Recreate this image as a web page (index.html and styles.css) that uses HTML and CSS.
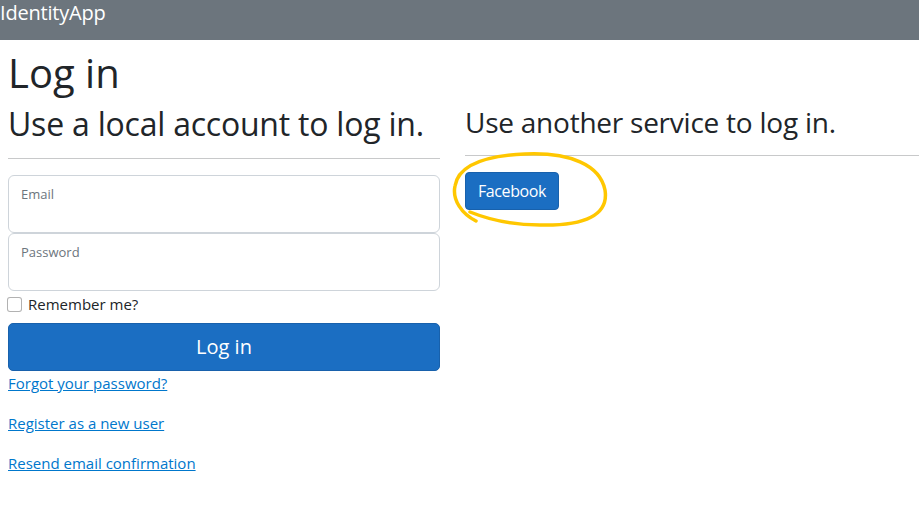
FILE: index.html
```html
<!DOCTYPE html>
<html lang="en">
<head>
<meta charset="utf-8">
<title>Log in - IdentityApp</title>
<link rel="stylesheet" href="styles.css">
</head>
<body>
<header class="navbar">
  <span class="brand">IdentityApp</span>
</header>
<main class="page">
  <h1 class="title">Log in</h1>
  <div class="columns">
    <section class="col-local">
      <h2 class="heading">Use a local account to log in.</h2>
      <hr class="rule">
      <form class="login-form">
        <div class="floating">
          <input class="field" type="email" id="email">
          <label class="floating-label" for="email">Email</label>
        </div>
        <div class="floating">
          <input class="field" type="password" id="password">
          <label class="floating-label" for="password">Password</label>
        </div>
        <div class="check">
          <input class="check-box" type="checkbox" id="remember">
          <label class="check-label" for="remember">Remember me?</label>
        </div>
        <button class="btn btn-lg" type="button">Log in</button>
        <div class="links">
          <p class="link-row"><a class="link" href="#">Forgot your password?</a></p>
          <p class="link-row"><a class="link" href="#">Register as a new user</a></p>
          <p class="link-row"><a class="link" href="#">Resend email confirmation</a></p>
        </div>
      </form>
    </section>
    <section class="col-external">
      <h3 class="heading-sm">Use another service to log in.</h3>
      <hr class="rule">
      <button class="btn" type="button">Facebook</button>
    </section>
  </div>
</main>
<svg class="annotation" width="919" height="510" viewBox="0 0 919 510" aria-hidden="true">
  <path d="M 476 221 C 462 214, 452 200, 455 186 C 458 168, 480 156, 525 154 C 570 152, 600 165, 605 190 C 609 215, 585 226, 540 225 C 510 225, 485 218, 470 212" fill="none" stroke="#ffc700" stroke-width="3.5" stroke-linecap="round" stroke-linejoin="round"/>
</svg>
</body>
</html>
```
FILE: styles.css
```css
* { box-sizing: border-box; }

html, body {
  margin: 0;
  padding: 0;
  background: #fff;
}

body {
  font-family: "Open Sans", "Noto Sans", sans-serif;
  font-size: 16px;
  line-height: 1.5;
  color: #212529;
  width: 919px;
  height: 510px;
  overflow: hidden;
  position: relative;
}

.navbar {
  height: 40px;
  background: #6c757d;
  display: flex;
  align-items: flex-start;
}

.brand {
  color: #fff;
  font-size: 20px;
  line-height: 28px;
  padding-left: 0;
  margin-top: -1px;
  letter-spacing: -0.2px;
}

.page {
  padding: 9px 0 0 8px;
}

.title {
  font-size: 40px;
  font-weight: 500;
  line-height: 48px;
  margin: 0 0 8px;
}

.columns {
  display: grid;
  grid-template-columns: 432px 1fr;
  column-gap: 25px;
}

.heading {
  font-size: 32px;
  font-weight: 500;
  line-height: 37px;
  margin: 0;
  letter-spacing: -0.22px;
}

.heading-sm {
  font-size: 28px;
  font-weight: 500;
  line-height: 34px;
  margin: 0;
  letter-spacing: -0.24px;
}

.rule {
  border: 0;
  border-top: 1px solid #c8c9ca;
  margin: 16px 0;
}

.login-form {
  display: flex;
  flex-direction: column;
}

.floating {
  position: relative;
}

.field {
  display: block;
  width: 100%;
  height: 58px;
  border: 1px solid #ced4da;
  border-radius: 6px;
  background: #fff;
  margin: 0;
  padding: 26px 12px 8px;
  font: inherit;
}

.floating-label {
  position: absolute;
  left: 13px;
  top: 9px;
  font-size: 13px;
  line-height: 20px;
  color: #6c757d;
}

.check {
  display: flex;
  align-items: center;
  gap: 6px;
  height: 26px;
  margin: 0 0 6px -1px;
}

.check-box {
  appearance: none;
  -webkit-appearance: none;
  width: 15px;
  height: 15px;
  margin: 0;
  border: 1px solid rgba(0, 0, 0, 0.3);
  border-radius: 3px;
  background: #fff;
}

.check-label {
  font-size: 15px;
}

.btn {
  font-family: inherit;
  font-size: 16px;
  line-height: 24px;
  color: #fff;
  background: #1b6ec2;
  border: 1px solid #1861ac;
  border-radius: 4px;
  padding: 6px 12px;
  cursor: pointer;
  letter-spacing: -0.4px;
}

.btn-lg {
  width: 100%;
  font-size: 20px;
  line-height: 30px;
  padding: 8px 16px;
  border-radius: 5px;
  letter-spacing: 0;
}

.links {
  padding-top: 0;
}

.link-row {
  margin: 0 0 16px;
  font-size: 15px;
  line-height: 24px;
}

.link {
  color: #0077cc;
  text-decoration: underline;
}

.col-external .heading-sm,
.col-external .rule {
  width: 100%;
}

.annotation {
  position: absolute;
  left: 0;
  top: 0;
  pointer-events: none;
}
```
